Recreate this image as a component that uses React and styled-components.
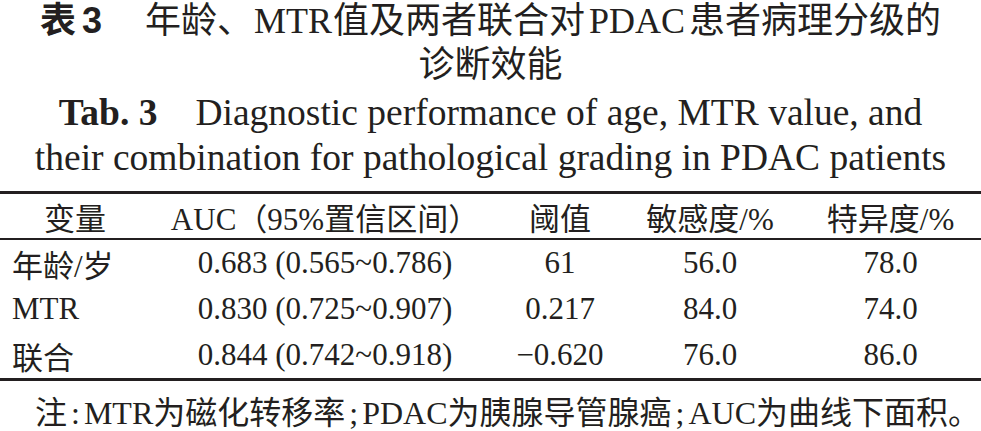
import React from "react";
import styled, { createGlobalStyle } from "styled-components";

const GlobalStyle = createGlobalStyle`
  html, body {
    margin: 0;
    padding: 0;
    background: #ffffff;
  }
  body {
    width: 981px;
    height: 431px;
    overflow: hidden;
    font-family: "Liberation Serif", "Noto Sans CJK SC", serif;
    color: #231f20;
  }
`;

const Page = styled.div`
  display: flex;
  flex-direction: column;
  width: 981px;
`;

const CnTitle = styled.div`
  font-size: 36px;
  line-height: 44px;
  text-align: center;
  margin-top: -1px;
`;

const Label = styled.span`
  font-family: "Liberation Sans", "Noto Sans CJK SC", sans-serif;
  font-weight: 700;
  margin-right: 43px;
`;

const LabelNum = styled.span`
  margin-left: 6px;
`;

const Latin = styled.span`
  margin: 0 ${(p) => p.space || 4}px;
`;

const EnTitle = styled.div`
  font-size: 37.5px;
  line-height: 45px;
  text-align: center;
  margin-top: 3px;
`;

const EnLabel = styled.span`
  font-weight: 700;
  margin-right: 38px;
`;

const Table = styled.div`
  display: grid;
  grid-template-columns: 150px 350px 120px 180px 181px;
  border-top: 3px solid #231f20;
  border-bottom: 3px solid #231f20;
  margin-top: 11px;
  font-size: 31px;
`;

const HeadCell = styled.div`
  height: 44px;
  display: flex;
  align-items: center;
  justify-content: center;
  border-bottom: 2px solid #231f20;
  white-space: nowrap;
`;

const Cell = styled.div`
  height: 46px;
  display: flex;
  align-items: center;
  justify-content: ${(p) => (p.left ? "flex-start" : "center")};
  padding-left: ${(p) => (p.left ? "12px" : "0")};
  white-space: nowrap;
`;

const Note = styled.div`
  font-size: 32px;
  line-height: 40px;
  padding-left: 35px;
  margin-top: 12px;
  white-space: nowrap;
`;

const Punct = styled.span`
  margin: 0 4px;
`;

const heads = ["变量", "AUC（95%置信区间）", "阈值", "敏感度/%", "特异度/%"];

const rows = [
  ["年龄/岁", "0.683 (0.565~0.786)", "61", "56.0", "78.0"],
  ["MTR", "0.830 (0.725~0.907)", "0.217", "84.0", "74.0"],
  ["联合", "0.844 (0.742~0.918)", "\u22120.620", "76.0", "86.0"],
];

export default function App() {
  return (
    <>
      <GlobalStyle />
      <Page>
        <CnTitle>
          <Label>
            表<LabelNum>3</LabelNum>
          </Label>
          年龄、<Latin space={1}>MTR</Latin>值及两者联合对<Latin>PDAC</Latin>
          患者病理分级的
          <br />
          诊断效能
        </CnTitle>
        <EnTitle>
          <EnLabel>Tab. 3</EnLabel>Diagnostic performance of age, MTR value, and
          <br />
          their combination for pathological grading in PDAC patients
        </EnTitle>
        <Table>
          {heads.map((h) => (
            <HeadCell key={h}>{h}</HeadCell>
          ))}
          {rows.map((r) =>
            r.map((v, i) => (
              <Cell key={r[0] + i} left={i === 0}>
                {v}
              </Cell>
            ))
          )}
        </Table>
        <Note>
          注<Punct>:</Punct>MTR为磁化转移率<Punct>;</Punct>PDAC为胰腺导管腺癌
          <Punct>;</Punct>AUC为曲线下面积。
        </Note>
      </Page>
    </>
  );
}
